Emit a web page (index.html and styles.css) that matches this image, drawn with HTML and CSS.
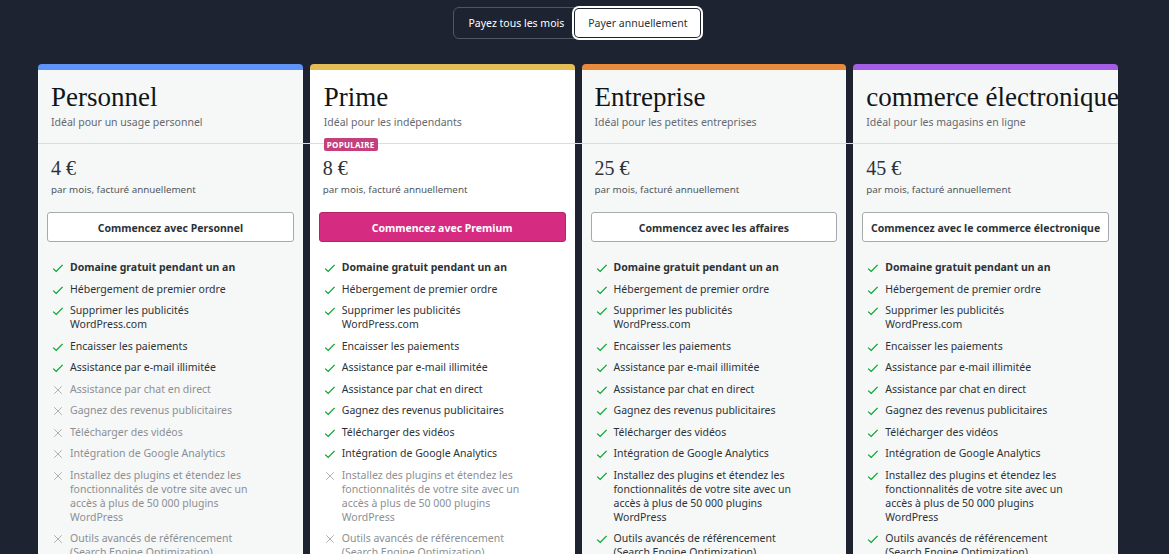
FILE: index.html
```html
<!DOCTYPE html>
<html lang="fr">
<head>
<meta charset="utf-8">
<title>Plans</title>
<link rel="stylesheet" href="styles.css">
</head>
<body>
<div class="page">
  <div class="toggle">
    <button class="toggle-btn">Payez tous les mois</button>
    <button class="toggle-btn is-active">Payer annuellement</button>
  </div>

  <div class="plans">
    <div class="row head">
      <div class="cell head-cell stripe-blue">
        <h2 class="title">Personnel</h2>
        <p class="tagline">Idéal pour un usage personnel</p>
      </div>
      <div class="cell head-cell stripe-yellow is-featured">
        <h2 class="title">Prime</h2>
        <p class="tagline">Idéal pour les indépendants</p>
      </div>
      <div class="cell head-cell stripe-orange">
        <h2 class="title">Entreprise</h2>
        <p class="tagline">Idéal pour les petites entreprises</p>
      </div>
      <div class="cell head-cell stripe-purple">
        <h2 class="title">commerce électronique</h2>
        <p class="tagline">Idéal pour les magasins en ligne</p>
      </div>
    </div>

    <div class="row body">
      <!-- Personnel -->
      <div class="cell body-cell">
        <div class="price">4 €</div>
        <div class="billing">par mois, facturé annuellement</div>
        <div class="cta"><button class="btn">Commencez avec Personnel</button></div>
        <ul class="features">
          <li class="yes strong"><svg class="ico" viewBox="0 0 12 12"><path d="M1.2 6.6 L4.2 9.4 L10.6 2.8"/></svg><span>Domaine gratuit pendant un an</span></li>
          <li class="yes"><svg class="ico" viewBox="0 0 12 12"><path d="M1.2 6.6 L4.2 9.4 L10.6 2.8"/></svg><span>Hébergement de premier ordre</span></li>
          <li class="yes"><svg class="ico" viewBox="0 0 12 12"><path d="M1.2 6.6 L4.2 9.4 L10.6 2.8"/></svg><span>Supprimer les publicités WordPress.com</span></li>
          <li class="yes"><svg class="ico" viewBox="0 0 12 12"><path d="M1.2 6.6 L4.2 9.4 L10.6 2.8"/></svg><span>Encaisser les paiements</span></li>
          <li class="yes"><svg class="ico" viewBox="0 0 12 12"><path d="M1.2 6.6 L4.2 9.4 L10.6 2.8"/></svg><span>Assistance par e-mail illimitée</span></li>
          <li class="no"><svg class="ico" viewBox="0 0 12 12"><path d="M1.5 1.5 L10.5 10.5 M10.5 1.5 L1.5 10.5"/></svg><span>Assistance par chat en direct</span></li>
          <li class="no"><svg class="ico" viewBox="0 0 12 12"><path d="M1.5 1.5 L10.5 10.5 M10.5 1.5 L1.5 10.5"/></svg><span>Gagnez des revenus publicitaires</span></li>
          <li class="no"><svg class="ico" viewBox="0 0 12 12"><path d="M1.5 1.5 L10.5 10.5 M10.5 1.5 L1.5 10.5"/></svg><span>Télécharger des vidéos</span></li>
          <li class="no"><svg class="ico" viewBox="0 0 12 12"><path d="M1.5 1.5 L10.5 10.5 M10.5 1.5 L1.5 10.5"/></svg><span>Intégration de Google Analytics</span></li>
          <li class="no"><svg class="ico" viewBox="0 0 12 12"><path d="M1.5 1.5 L10.5 10.5 M10.5 1.5 L1.5 10.5"/></svg><span>Installez des plugins et étendez les fonctionnalités de votre site avec un accès à plus de 50 000 plugins WordPress</span></li>
          <li class="no"><svg class="ico" viewBox="0 0 12 12"><path d="M1.5 1.5 L10.5 10.5 M10.5 1.5 L1.5 10.5"/></svg><span>Outils avancés de référencement (Search Engine Optimization)</span></li>
        </ul>
      </div>

      <!-- Prime -->
      <div class="cell body-cell is-featured">
        <span class="badge">POPULAIRE</span>
        <div class="price">8 €</div>
        <div class="billing">par mois, facturé annuellement</div>
        <div class="cta"><button class="btn btn-primary">Commencez avec Premium</button></div>
        <ul class="features">
          <li class="yes strong"><svg class="ico" viewBox="0 0 12 12"><path d="M1.2 6.6 L4.2 9.4 L10.6 2.8"/></svg><span>Domaine gratuit pendant un an</span></li>
          <li class="yes"><svg class="ico" viewBox="0 0 12 12"><path d="M1.2 6.6 L4.2 9.4 L10.6 2.8"/></svg><span>Hébergement de premier ordre</span></li>
          <li class="yes"><svg class="ico" viewBox="0 0 12 12"><path d="M1.2 6.6 L4.2 9.4 L10.6 2.8"/></svg><span>Supprimer les publicités WordPress.com</span></li>
          <li class="yes"><svg class="ico" viewBox="0 0 12 12"><path d="M1.2 6.6 L4.2 9.4 L10.6 2.8"/></svg><span>Encaisser les paiements</span></li>
          <li class="yes"><svg class="ico" viewBox="0 0 12 12"><path d="M1.2 6.6 L4.2 9.4 L10.6 2.8"/></svg><span>Assistance par e-mail illimitée</span></li>
          <li class="yes"><svg class="ico" viewBox="0 0 12 12"><path d="M1.2 6.6 L4.2 9.4 L10.6 2.8"/></svg><span>Assistance par chat en direct</span></li>
          <li class="yes"><svg class="ico" viewBox="0 0 12 12"><path d="M1.2 6.6 L4.2 9.4 L10.6 2.8"/></svg><span>Gagnez des revenus publicitaires</span></li>
          <li class="yes"><svg class="ico" viewBox="0 0 12 12"><path d="M1.2 6.6 L4.2 9.4 L10.6 2.8"/></svg><span>Télécharger des vidéos</span></li>
          <li class="yes"><svg class="ico" viewBox="0 0 12 12"><path d="M1.2 6.6 L4.2 9.4 L10.6 2.8"/></svg><span>Intégration de Google Analytics</span></li>
          <li class="no"><svg class="ico" viewBox="0 0 12 12"><path d="M1.5 1.5 L10.5 10.5 M10.5 1.5 L1.5 10.5"/></svg><span>Installez des plugins et étendez les fonctionnalités de votre site avec un accès à plus de 50 000 plugins WordPress</span></li>
          <li class="no"><svg class="ico" viewBox="0 0 12 12"><path d="M1.5 1.5 L10.5 10.5 M10.5 1.5 L1.5 10.5"/></svg><span>Outils avancés de référencement (Search Engine Optimization)</span></li>
        </ul>
      </div>

      <!-- Entreprise -->
      <div class="cell body-cell">
        <div class="price">25 €</div>
        <div class="billing">par mois, facturé annuellement</div>
        <div class="cta"><button class="btn">Commencez avec les affaires</button></div>
        <ul class="features">
          <li class="yes strong"><svg class="ico" viewBox="0 0 12 12"><path d="M1.2 6.6 L4.2 9.4 L10.6 2.8"/></svg><span>Domaine gratuit pendant un an</span></li>
          <li class="yes"><svg class="ico" viewBox="0 0 12 12"><path d="M1.2 6.6 L4.2 9.4 L10.6 2.8"/></svg><span>Hébergement de premier ordre</span></li>
          <li class="yes"><svg class="ico" viewBox="0 0 12 12"><path d="M1.2 6.6 L4.2 9.4 L10.6 2.8"/></svg><span>Supprimer les publicités WordPress.com</span></li>
          <li class="yes"><svg class="ico" viewBox="0 0 12 12"><path d="M1.2 6.6 L4.2 9.4 L10.6 2.8"/></svg><span>Encaisser les paiements</span></li>
          <li class="yes"><svg class="ico" viewBox="0 0 12 12"><path d="M1.2 6.6 L4.2 9.4 L10.6 2.8"/></svg><span>Assistance par e-mail illimitée</span></li>
          <li class="yes"><svg class="ico" viewBox="0 0 12 12"><path d="M1.2 6.6 L4.2 9.4 L10.6 2.8"/></svg><span>Assistance par chat en direct</span></li>
          <li class="yes"><svg class="ico" viewBox="0 0 12 12"><path d="M1.2 6.6 L4.2 9.4 L10.6 2.8"/></svg><span>Gagnez des revenus publicitaires</span></li>
          <li class="yes"><svg class="ico" viewBox="0 0 12 12"><path d="M1.2 6.6 L4.2 9.4 L10.6 2.8"/></svg><span>Télécharger des vidéos</span></li>
          <li class="yes"><svg class="ico" viewBox="0 0 12 12"><path d="M1.2 6.6 L4.2 9.4 L10.6 2.8"/></svg><span>Intégration de Google Analytics</span></li>
          <li class="yes"><svg class="ico" viewBox="0 0 12 12"><path d="M1.2 6.6 L4.2 9.4 L10.6 2.8"/></svg><span>Installez des plugins et étendez les fonctionnalités de votre site avec un accès à plus de 50 000 plugins WordPress</span></li>
          <li class="yes"><svg class="ico" viewBox="0 0 12 12"><path d="M1.2 6.6 L4.2 9.4 L10.6 2.8"/></svg><span>Outils avancés de référencement (Search Engine Optimization)</span></li>
        </ul>
      </div>

      <!-- commerce électronique -->
      <div class="cell body-cell">
        <div class="price">45 €</div>
        <div class="billing">par mois, facturé annuellement</div>
        <div class="cta"><button class="btn">Commencez avec le commerce électronique</button></div>
        <ul class="features">
          <li class="yes strong"><svg class="ico" viewBox="0 0 12 12"><path d="M1.2 6.6 L4.2 9.4 L10.6 2.8"/></svg><span>Domaine gratuit pendant un an</span></li>
          <li class="yes"><svg class="ico" viewBox="0 0 12 12"><path d="M1.2 6.6 L4.2 9.4 L10.6 2.8"/></svg><span>Hébergement de premier ordre</span></li>
          <li class="yes"><svg class="ico" viewBox="0 0 12 12"><path d="M1.2 6.6 L4.2 9.4 L10.6 2.8"/></svg><span>Supprimer les publicités WordPress.com</span></li>
          <li class="yes"><svg class="ico" viewBox="0 0 12 12"><path d="M1.2 6.6 L4.2 9.4 L10.6 2.8"/></svg><span>Encaisser les paiements</span></li>
          <li class="yes"><svg class="ico" viewBox="0 0 12 12"><path d="M1.2 6.6 L4.2 9.4 L10.6 2.8"/></svg><span>Assistance par e-mail illimitée</span></li>
          <li class="yes"><svg class="ico" viewBox="0 0 12 12"><path d="M1.2 6.6 L4.2 9.4 L10.6 2.8"/></svg><span>Assistance par chat en direct</span></li>
          <li class="yes"><svg class="ico" viewBox="0 0 12 12"><path d="M1.2 6.6 L4.2 9.4 L10.6 2.8"/></svg><span>Gagnez des revenus publicitaires</span></li>
          <li class="yes"><svg class="ico" viewBox="0 0 12 12"><path d="M1.2 6.6 L4.2 9.4 L10.6 2.8"/></svg><span>Télécharger des vidéos</span></li>
          <li class="yes"><svg class="ico" viewBox="0 0 12 12"><path d="M1.2 6.6 L4.2 9.4 L10.6 2.8"/></svg><span>Intégration de Google Analytics</span></li>
          <li class="yes"><svg class="ico" viewBox="0 0 12 12"><path d="M1.2 6.6 L4.2 9.4 L10.6 2.8"/></svg><span>Installez des plugins et étendez les fonctionnalités de votre site avec un accès à plus de 50 000 plugins WordPress</span></li>
          <li class="yes"><svg class="ico" viewBox="0 0 12 12"><path d="M1.2 6.6 L4.2 9.4 L10.6 2.8"/></svg><span>Outils avancés de référencement (Search Engine Optimization)</span></li>
        </ul>
      </div>
    </div>
  </div>
</div>
</body>
</html>
```

FILE: styles.css
```css
* { box-sizing: border-box; }

html, body {
  margin: 0;
  padding: 0;
  background: #1d2330;
  font-family: "Noto Sans", "Open Sans", sans-serif;
  color: #2c3338;
  overflow: hidden;
}

.page {
  width: 1156px;
  padding-top: 7px;
  display: flex;
  flex-direction: column;
  align-items: center;
}

.toggle {
  display: flex;
  align-items: center;
  height: 32px;
  padding: 2px;
  border: 1px solid #50575e;
  border-radius: 6px;
}

.toggle-btn {
  height: 28px;
  padding: 0 9px 0 12px;
  border: 0;
  border-radius: 4px;
  background: transparent;
  color: #fff;
  font-family: "Noto Sans", sans-serif;
  font-size: 10.5px;
  line-height: 28px;
  cursor: pointer;
}

.toggle-btn.is-active {
  margin-left: 2px;
  padding: 0 12px 0 13px;
  background: #fff;
  color: #2c3338;
  box-shadow: 0 0 0 1px #1d2330, 0 0 0 3px #fff;
}

.plans {
  width: 1080px;
  margin-top: 25px;
}

.row {
  display: grid;
  grid-template-columns: repeat(4, minmax(0, 1fr));
  column-gap: 7px;
}

.row.head {
  border-bottom: 1px solid #dcdcde;
}

.cell {
  min-width: 0;
  background: #f6f7f7;
  overflow: hidden;
}

.cell.is-featured {
  background: #fff;
}

.head-cell {
  border-top: 6px solid #5b8ff9;
  border-radius: 4px 4px 0 0;
  padding: 12px 14px 13px 13px;
}

.is-featured.head-cell { padding-left: 14px; }

.stripe-blue { border-top-color: #5e93f7; }
.stripe-yellow { border-top-color: #e3bd56; }
.stripe-orange { border-top-color: #e8893b; }
.stripe-purple { border-top-color: #a35de6; }

.title {
  margin: 0;
  font-family: "Liberation Serif", "Times New Roman", serif;
  font-weight: 400;
  font-size: 27px;
  line-height: 30px;
  color: #101517;
  white-space: nowrap;
}

.tagline {
  margin: 2px 0 0;
  font-size: 10.5px;
  line-height: 16px;
  color: #646970;
  white-space: nowrap;
}

.body-cell {
  position: relative;
  overflow: visible;
  padding-top: 12px;
}

.badge {
  position: absolute;
  top: -6px;
  left: 14px;
  height: 13px;
  padding: 0 3px;
  border-radius: 2px;
  background: #c43f7c;
  color: #fff;
  font-size: 8px;
  font-weight: 700;
  line-height: 13px;
  letter-spacing: 0.3px;
}

.price {
  padding: 0 14px 0 13px;
  font-family: "Liberation Serif", "Times New Roman", serif;
  font-size: 20px;
  line-height: 24px;
  color: #2c3338;
}

.billing {
  margin-top: 3px;
  padding: 0 14px 0 13px;
  font-size: 9.8px;
  line-height: 14px;
  color: #50575e;
}

.cta {
  margin-top: 15px;
  padding: 0 9px;
}

.btn {
  display: block;
  width: 100%;
  height: 30px;
  padding: 1px 0 0;
  border: 1px solid #a7aaad;
  border-radius: 3px;
  background: #fff;
  color: #2c3338;
  font-family: "Noto Sans", sans-serif;
  font-size: 10.5px;
  font-weight: 700;
  cursor: pointer;
  white-space: nowrap;
  overflow: hidden;
}

.btn-primary {
  background: #d52c82;
  border-color: #b32368;
  color: #fff;
}

.features {
  list-style: none;
  margin: 18px 0 0;
  padding: 0 14px;
  display: flex;
  flex-direction: column;
  row-gap: 7.5px;
}

.features li {
  display: flex;
  align-items: flex-start;
  font-size: 10.5px;
  line-height: 14px;
  color: #2c3338;
}

.features li span {
  max-width: 190px;
}

.features li.strong {
  font-weight: 700;
}

.features li.no {
  color: #8c8f94;
}

.ico {
  flex: none;
  width: 12px;
  height: 12px;
  margin: 2px 6px 0 0;
  fill: none;
  stroke-width: 1.2;
}

.yes .ico { stroke: #00a32a; }
.no .ico {
  stroke: #a7aaad;
  stroke-width: 1.1;
  width: 10px;
  height: 10px;
  margin: 3px 7px 0 1px;
}
```
